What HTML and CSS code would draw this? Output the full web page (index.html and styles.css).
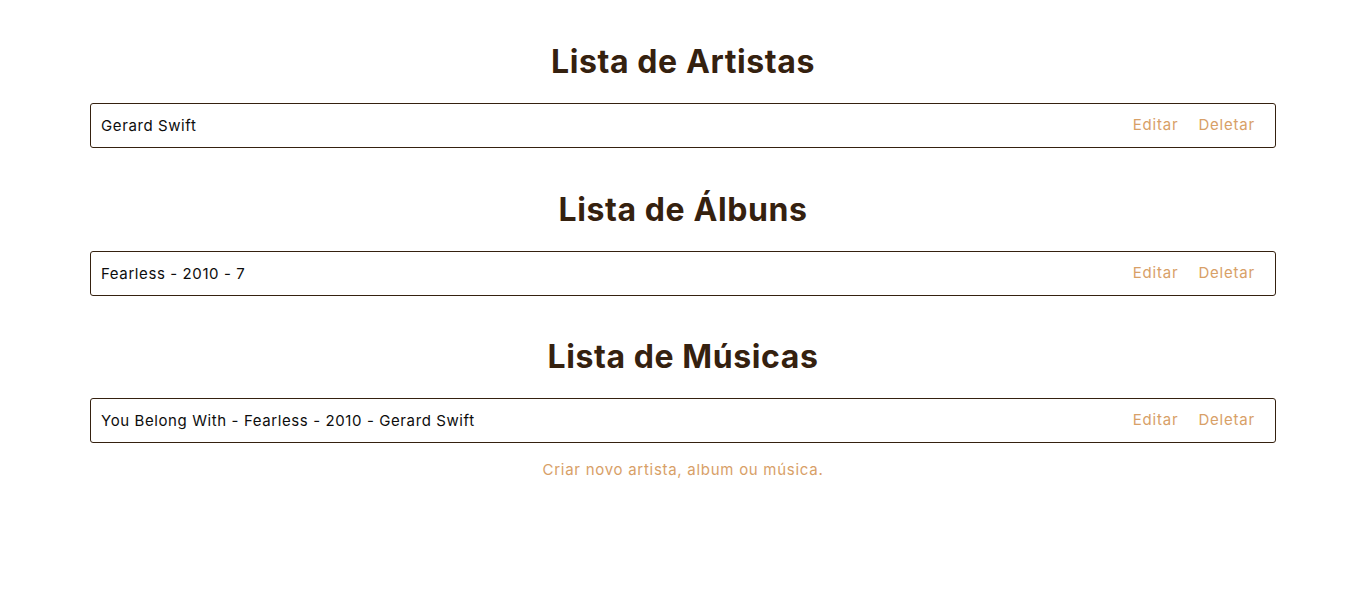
FILE: index.html
```html
<!DOCTYPE html>
<html lang="pt-BR">
<head>
<meta charset="utf-8">
<title>Listas</title>
<link rel="stylesheet" href="styles.css">
</head>
<body>
<main class="page">
  <section class="section">
    <h2 class="title">Lista de Artistas</h2>
    <ul class="list">
      <li class="item"><span class="item-text">Gerard Swift</span><span class="actions"><a class="action" href="#">Editar</a><a class="action" href="#">Deletar</a></span></li>
    </ul>
  </section>
  <section class="section">
    <h2 class="title">Lista de Álbuns</h2>
    <ul class="list">
      <li class="item"><span class="item-text">Fearless - 2010 - 7</span><span class="actions"><a class="action" href="#">Editar</a><a class="action" href="#">Deletar</a></span></li>
    </ul>
  </section>
  <section class="section">
    <h2 class="title">Lista de Músicas</h2>
    <ul class="list">
      <li class="item"><span class="item-text">You Belong With - Fearless - 2010 - Gerard Swift</span><span class="actions"><a class="action" href="#">Editar</a><a class="action" href="#">Deletar</a></span></li>
    </ul>
  </section>
  <a class="create" href="#">Criar novo artista, album ou música.</a>
</main>
</body>
</html>
```
FILE: styles.css
```css
* { box-sizing: border-box; }
body {
  margin: 0;
  background: #ffffff;
  font-family: "Inter", "Noto Sans", sans-serif;
}
.page {
  width: 1186px;
  margin: 0 auto 0 90px;
  padding-top: 40px;
  display: flex;
  flex-direction: column;
  align-items: stretch;
}
.section {
  display: flex;
  flex-direction: column;
  margin-bottom: 40px;
}
.section:nth-of-type(2) { margin-bottom: 39px; }
.section:last-of-type { margin-bottom: 16px; }
.title {
  margin: 0;
  text-align: center;
  font-size: 32px;
  font-weight: 700;
  letter-spacing: 0.6px;
  color: #35210f;
  line-height: 44px;
  margin-bottom: 19px;
}
.list {
  list-style: none;
  margin: 0;
  padding: 0;
}
.item {
  height: 45px;
  border: 1px solid #35210f;
  border-radius: 3px;
  display: flex;
  align-items: center;
  justify-content: space-between;
  padding: 0 20px 0 10px;
  font-size: 15px;
  letter-spacing: 0.6px;
  color: #0d0d0d;
}
.item-text { padding-bottom: 1px; }
.actions {
  display: flex;
  gap: 20px;
  padding-bottom: 2px;
}
.action {
  color: #d8a067;
  text-decoration: none;
  font-size: 15px;
  letter-spacing: 0.8px;
}
.create {
  align-self: center;
  margin-top: 1px;
  color: #d8a067;
  text-decoration: none;
  font-size: 15px;
  letter-spacing: 0.72px;
}
```
